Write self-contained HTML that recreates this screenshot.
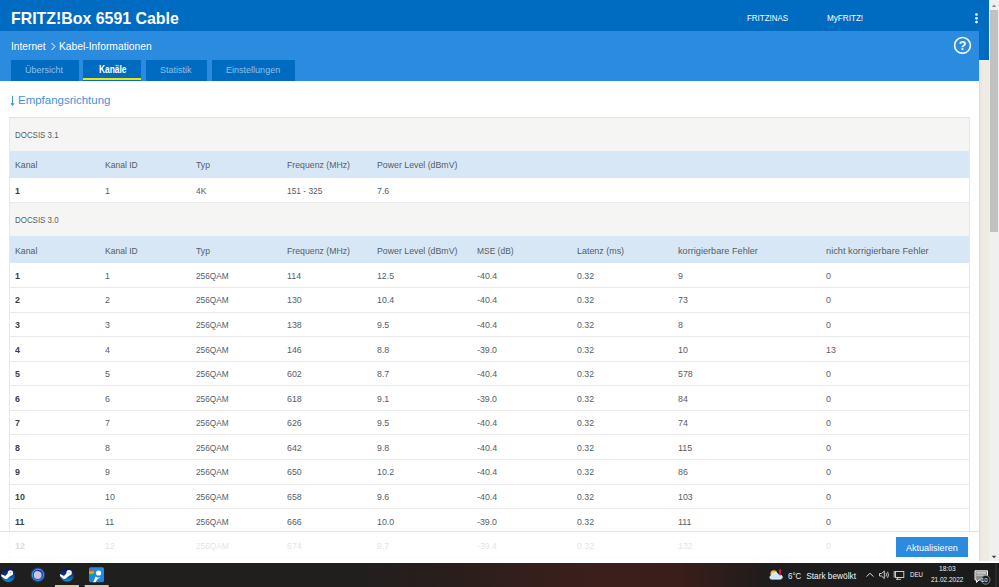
<!DOCTYPE html>
<html><head><meta charset="utf-8">
<style>
*{margin:0;padding:0;box-sizing:content-box}
html,body{width:999px;height:587px;overflow:hidden;background:#fff;position:relative;font-family:"Liberation Sans",sans-serif}
div{position:absolute}
.t{white-space:nowrap;line-height:1;color:#565d66;transform-origin:0 0}
.b{font-weight:bold;color:#383e47}
.sec{left:10px;width:959px;background:#f5f5f3}
.hdr{left:10px;width:959px;background:#d7e7f6}
.line{left:10px;width:959px;height:1px;background:#eaeaea}
.w{color:#fff;white-space:nowrap;line-height:1;transform-origin:0 0}
</style></head><body>
<div style="left:0;top:0;width:989px;height:31px;background:#006cc1"></div>
<div style="left:0;top:31px;width:979px;height:50px;background:#2a8bdf"></div>
<div style="left:979px;top:31px;width:10px;height:29px;background:#006cc1"></div>
<div class="w" style="left:11.00px;top:9.61px;font-size:17px;transform:scaleX(0.935);font-weight:bold">FRITZ!Box 6591 Cable</div>

<div class="w" style="left:747.00px;top:14.21px;font-size:9.2px;transform:scaleX(0.865);">FRITZ!NAS</div>

<div class="w" style="left:826.50px;top:14.21px;font-size:9.2px;transform:scaleX(0.885);">MyFRITZ!</div>

<svg style="position:absolute;left:969px;top:8px" width="15" height="20"><circle cx="7.5" cy="6.5" r="1.35" fill="#fff"/><circle cx="7.5" cy="10.3" r="1.35" fill="#fff"/><circle cx="7.5" cy="14.1" r="1.35" fill="#fff"/></svg>
<div class="w" style="left:11.00px;top:42.37px;font-size:10.2px;">Internet</div>

<svg style="position:absolute;left:0;top:0" width="999" height="100"><path d="M51.5 43 L55 46.5 L51.5 50" fill="none" stroke="#fff" stroke-width="1"/>
<circle cx="962.5" cy="45.4" r="7.9" fill="none" stroke="#fff" stroke-width="1.6"/></svg>
<div class="w" style="left:58.50px;top:42.37px;font-size:10.2px;transform:scaleX(1.010);">Kabel-Informationen</div>

<div class="w" style="left:957.6px;top:39.6px;font-size:12.5px;font-weight:bold;width:10px;text-align:center">?</div>
<div style="left:11px;top:60px;width:68px;height:21px;background:#006cc1"></div>
<div style="left:83px;top:60px;width:58px;height:21px;background:#006cc1"></div>
<div style="left:83px;top:78px;width:58px;height:2px;background:#f0e500"></div>
<div style="left:146px;top:60px;width:61px;height:21px;background:#006cc1"></div>
<div style="left:212px;top:60px;width:83px;height:21px;background:#006cc1"></div>
<div class="w" style="left:24.80px;top:64.76px;font-size:9.5px;transform:scaleX(0.950);color:#8fc0ec">Übersicht</div>

<div class="w" style="left:98.90px;top:64.94px;font-size:10px;transform:scaleX(0.840);font-weight:bold">Kanäle</div>

<div class="w" style="left:160.00px;top:64.76px;font-size:9.5px;transform:scaleX(0.950);color:#8fc0ec">Statistik</div>

<div class="w" style="left:226.00px;top:64.76px;font-size:9.5px;transform:scaleX(0.950);color:#8fc0ec">Einstellungen</div>

<svg style="position:absolute;left:0;top:90px" width="20" height="20"><path d="M12.5 5.8 L12.5 15" stroke="#4490de" stroke-width="1" fill="none"/><path d="M10.3 13.3 L12.5 15.9 L14.7 13.3 Z" fill="#4490de"/></svg>
<div class="t" style="left:17.60px;top:95.02px;font-size:11.2px;transform:scaleX(1.025);color:#4490de">Empfangsrichtung</div>

<div style="left:9px;top:117px;width:1px;height:446px;background:#e8e8e8"></div><div style="left:969px;top:117px;width:1px;height:446px;background:#e8e8e8"></div><div style="left:9px;top:117px;width:961px;height:1px;background:#e3e3e3"></div><div class="sec" style="top:118px;height:33px"></div><div class="t" style="left:15.00px;top:129.76px;font-size:9.5px;transform:scaleX(0.834);">DOCSIS 3.1</div>
<div class="hdr" style="top:151px;height:27px"></div><div class="t" style="left:15.00px;top:160.36px;font-size:9.5px;transform:scaleX(0.921);">Kanal</div>
<div class="t" style="left:105.30px;top:160.36px;font-size:9.5px;transform:scaleX(0.899);">Kanal ID</div>
<div class="t" style="left:196.00px;top:160.36px;font-size:9.5px;transform:scaleX(0.910);">Typ</div>
<div class="t" style="left:286.50px;top:160.36px;font-size:9.5px;transform:scaleX(0.918);">Frequenz (MHz)</div>
<div class="t" style="left:376.90px;top:160.36px;font-size:9.5px;transform:scaleX(0.923);">Power Level (dBmV)</div>
<div class="t b" style="left:15.00px;top:185.56px;font-size:9.5px;transform:scaleX(0.930);">1</div>
<div class="t" style="left:105.30px;top:185.56px;font-size:9.5px;transform:scaleX(0.930);">1</div>
<div class="t" style="left:196.00px;top:185.56px;font-size:9.5px;transform:scaleX(0.881);">4K</div>
<div class="t" style="left:286.50px;top:185.56px;font-size:9.5px;transform:scaleX(0.881);">151 - 325</div>
<div class="t" style="left:376.90px;top:185.56px;font-size:9.5px;transform:scaleX(0.924);">7.6</div>
<div class="line" style="top:202px"></div><div class="sec" style="top:203px;height:33px"></div><div class="t" style="left:15.00px;top:215.16px;font-size:9.5px;transform:scaleX(0.834);">DOCSIS 3.0</div>
<div class="hdr" style="top:236px;height:27px"></div><div class="t" style="left:15.00px;top:245.56px;font-size:9.5px;transform:scaleX(0.921);">Kanal</div>
<div class="t" style="left:105.30px;top:245.56px;font-size:9.5px;transform:scaleX(0.899);">Kanal ID</div>
<div class="t" style="left:196.00px;top:245.56px;font-size:9.5px;transform:scaleX(0.910);">Typ</div>
<div class="t" style="left:286.50px;top:245.56px;font-size:9.5px;transform:scaleX(0.918);">Frequenz (MHz)</div>
<div class="t" style="left:376.90px;top:245.56px;font-size:9.5px;transform:scaleX(0.923);">Power Level (dBmV)</div>
<div class="t" style="left:477.00px;top:245.56px;font-size:9.5px;transform:scaleX(0.888);">MSE (dB)</div>
<div class="t" style="left:577.00px;top:245.56px;font-size:9.5px;transform:scaleX(0.939);">Latenz (ms)</div>
<div class="t" style="left:677.60px;top:245.56px;font-size:9.5px;transform:scaleX(0.964);">korrigierbare Fehler</div>
<div class="t" style="left:826.00px;top:245.56px;font-size:9.5px;transform:scaleX(0.972);">nicht korrigierbare Fehler</div>
<div class="t b" style="left:15.00px;top:270.76px;font-size:9.5px;transform:scaleX(0.930);">1</div>
<div class="t" style="left:105.30px;top:270.76px;font-size:9.5px;transform:scaleX(0.930);">1</div>
<div class="t" style="left:196.00px;top:270.76px;font-size:9.5px;transform:scaleX(0.873);">256QAM</div>
<div class="t" style="left:286.50px;top:270.76px;font-size:9.5px;transform:scaleX(0.930);">114</div>
<div class="t" style="left:376.90px;top:270.76px;font-size:9.5px;transform:scaleX(0.919);">12.5</div>
<div class="t" style="left:477.00px;top:270.76px;font-size:9.5px;transform:scaleX(0.933);">-40.4</div>
<div class="t" style="left:577.00px;top:270.76px;font-size:9.5px;transform:scaleX(0.919);">0.32</div>
<div class="t" style="left:677.60px;top:270.76px;font-size:9.5px;transform:scaleX(0.930);">9</div>
<div class="t" style="left:826.00px;top:270.76px;font-size:9.5px;transform:scaleX(0.930);">0</div>
<div class="line" style="top:287px"></div><div class="t b" style="left:15.00px;top:295.34px;font-size:9.5px;transform:scaleX(0.930);">2</div>
<div class="t" style="left:105.30px;top:295.34px;font-size:9.5px;transform:scaleX(0.930);">2</div>
<div class="t" style="left:196.00px;top:295.34px;font-size:9.5px;transform:scaleX(0.873);">256QAM</div>
<div class="t" style="left:286.50px;top:295.34px;font-size:9.5px;transform:scaleX(0.930);">130</div>
<div class="t" style="left:376.90px;top:295.34px;font-size:9.5px;transform:scaleX(0.926);">10.4</div>
<div class="t" style="left:477.00px;top:295.34px;font-size:9.5px;transform:scaleX(0.933);">-40.4</div>
<div class="t" style="left:577.00px;top:295.34px;font-size:9.5px;transform:scaleX(0.919);">0.32</div>
<div class="t" style="left:677.60px;top:295.34px;font-size:9.5px;transform:scaleX(0.930);">73</div>
<div class="t" style="left:826.00px;top:295.34px;font-size:9.5px;transform:scaleX(0.930);">0</div>
<div class="line" style="top:312px"></div><div class="t b" style="left:15.00px;top:319.92px;font-size:9.5px;transform:scaleX(0.930);">3</div>
<div class="t" style="left:105.30px;top:319.92px;font-size:9.5px;transform:scaleX(0.930);">3</div>
<div class="t" style="left:196.00px;top:319.92px;font-size:9.5px;transform:scaleX(0.873);">256QAM</div>
<div class="t" style="left:286.50px;top:319.92px;font-size:9.5px;transform:scaleX(0.930);">138</div>
<div class="t" style="left:376.90px;top:319.92px;font-size:9.5px;transform:scaleX(0.924);">9.5</div>
<div class="t" style="left:477.00px;top:319.92px;font-size:9.5px;transform:scaleX(0.933);">-40.4</div>
<div class="t" style="left:577.00px;top:319.92px;font-size:9.5px;transform:scaleX(0.919);">0.32</div>
<div class="t" style="left:677.60px;top:319.92px;font-size:9.5px;transform:scaleX(0.930);">8</div>
<div class="t" style="left:826.00px;top:319.92px;font-size:9.5px;transform:scaleX(0.930);">0</div>
<div class="line" style="top:336px"></div><div class="t b" style="left:15.00px;top:344.50px;font-size:9.5px;transform:scaleX(0.930);">4</div>
<div class="t" style="left:105.30px;top:344.50px;font-size:9.5px;transform:scaleX(0.930);">4</div>
<div class="t" style="left:196.00px;top:344.50px;font-size:9.5px;transform:scaleX(0.873);">256QAM</div>
<div class="t" style="left:286.50px;top:344.50px;font-size:9.5px;transform:scaleX(0.930);">146</div>
<div class="t" style="left:376.90px;top:344.50px;font-size:9.5px;transform:scaleX(0.924);">8.8</div>
<div class="t" style="left:477.00px;top:344.50px;font-size:9.5px;transform:scaleX(0.922);">-39.0</div>
<div class="t" style="left:577.00px;top:344.50px;font-size:9.5px;transform:scaleX(0.919);">0.32</div>
<div class="t" style="left:677.60px;top:344.50px;font-size:9.5px;transform:scaleX(0.930);">10</div>
<div class="t" style="left:826.00px;top:344.50px;font-size:9.5px;transform:scaleX(0.930);">13</div>
<div class="line" style="top:361px"></div><div class="t b" style="left:15.00px;top:369.08px;font-size:9.5px;transform:scaleX(0.930);">5</div>
<div class="t" style="left:105.30px;top:369.08px;font-size:9.5px;transform:scaleX(0.930);">5</div>
<div class="t" style="left:196.00px;top:369.08px;font-size:9.5px;transform:scaleX(0.873);">256QAM</div>
<div class="t" style="left:286.50px;top:369.08px;font-size:9.5px;transform:scaleX(0.930);">602</div>
<div class="t" style="left:376.90px;top:369.08px;font-size:9.5px;transform:scaleX(0.924);">8.7</div>
<div class="t" style="left:477.00px;top:369.08px;font-size:9.5px;transform:scaleX(0.933);">-40.4</div>
<div class="t" style="left:577.00px;top:369.08px;font-size:9.5px;transform:scaleX(0.919);">0.32</div>
<div class="t" style="left:677.60px;top:369.08px;font-size:9.5px;transform:scaleX(0.930);">578</div>
<div class="t" style="left:826.00px;top:369.08px;font-size:9.5px;transform:scaleX(0.930);">0</div>
<div class="line" style="top:385px"></div><div class="t b" style="left:15.00px;top:393.66px;font-size:9.5px;transform:scaleX(0.930);">6</div>
<div class="t" style="left:105.30px;top:393.66px;font-size:9.5px;transform:scaleX(0.930);">6</div>
<div class="t" style="left:196.00px;top:393.66px;font-size:9.5px;transform:scaleX(0.873);">256QAM</div>
<div class="t" style="left:286.50px;top:393.66px;font-size:9.5px;transform:scaleX(0.930);">618</div>
<div class="t" style="left:376.90px;top:393.66px;font-size:9.5px;transform:scaleX(0.924);">9.1</div>
<div class="t" style="left:477.00px;top:393.66px;font-size:9.5px;transform:scaleX(0.922);">-39.0</div>
<div class="t" style="left:577.00px;top:393.66px;font-size:9.5px;transform:scaleX(0.919);">0.32</div>
<div class="t" style="left:677.60px;top:393.66px;font-size:9.5px;transform:scaleX(0.930);">84</div>
<div class="t" style="left:826.00px;top:393.66px;font-size:9.5px;transform:scaleX(0.930);">0</div>
<div class="line" style="top:410px"></div><div class="t b" style="left:15.00px;top:418.24px;font-size:9.5px;transform:scaleX(0.930);">7</div>
<div class="t" style="left:105.30px;top:418.24px;font-size:9.5px;transform:scaleX(0.930);">7</div>
<div class="t" style="left:196.00px;top:418.24px;font-size:9.5px;transform:scaleX(0.873);">256QAM</div>
<div class="t" style="left:286.50px;top:418.24px;font-size:9.5px;transform:scaleX(0.930);">626</div>
<div class="t" style="left:376.90px;top:418.24px;font-size:9.5px;transform:scaleX(0.924);">9.5</div>
<div class="t" style="left:477.00px;top:418.24px;font-size:9.5px;transform:scaleX(0.933);">-40.4</div>
<div class="t" style="left:577.00px;top:418.24px;font-size:9.5px;transform:scaleX(0.919);">0.32</div>
<div class="t" style="left:677.60px;top:418.24px;font-size:9.5px;transform:scaleX(0.930);">74</div>
<div class="t" style="left:826.00px;top:418.24px;font-size:9.5px;transform:scaleX(0.930);">0</div>
<div class="line" style="top:434px"></div><div class="t b" style="left:15.00px;top:442.82px;font-size:9.5px;transform:scaleX(0.930);">8</div>
<div class="t" style="left:105.30px;top:442.82px;font-size:9.5px;transform:scaleX(0.930);">8</div>
<div class="t" style="left:196.00px;top:442.82px;font-size:9.5px;transform:scaleX(0.873);">256QAM</div>
<div class="t" style="left:286.50px;top:442.82px;font-size:9.5px;transform:scaleX(0.930);">642</div>
<div class="t" style="left:376.90px;top:442.82px;font-size:9.5px;transform:scaleX(0.924);">9.8</div>
<div class="t" style="left:477.00px;top:442.82px;font-size:9.5px;transform:scaleX(0.933);">-40.4</div>
<div class="t" style="left:577.00px;top:442.82px;font-size:9.5px;transform:scaleX(0.919);">0.32</div>
<div class="t" style="left:677.60px;top:442.82px;font-size:9.5px;transform:scaleX(0.930);">115</div>
<div class="t" style="left:826.00px;top:442.82px;font-size:9.5px;transform:scaleX(0.930);">0</div>
<div class="line" style="top:459px"></div><div class="t b" style="left:15.00px;top:467.40px;font-size:9.5px;transform:scaleX(0.930);">9</div>
<div class="t" style="left:105.30px;top:467.40px;font-size:9.5px;transform:scaleX(0.930);">9</div>
<div class="t" style="left:196.00px;top:467.40px;font-size:9.5px;transform:scaleX(0.873);">256QAM</div>
<div class="t" style="left:286.50px;top:467.40px;font-size:9.5px;transform:scaleX(0.930);">650</div>
<div class="t" style="left:376.90px;top:467.40px;font-size:9.5px;transform:scaleX(0.926);">10.2</div>
<div class="t" style="left:477.00px;top:467.40px;font-size:9.5px;transform:scaleX(0.933);">-40.4</div>
<div class="t" style="left:577.00px;top:467.40px;font-size:9.5px;transform:scaleX(0.919);">0.32</div>
<div class="t" style="left:677.60px;top:467.40px;font-size:9.5px;transform:scaleX(0.930);">86</div>
<div class="t" style="left:826.00px;top:467.40px;font-size:9.5px;transform:scaleX(0.930);">0</div>
<div class="line" style="top:484px"></div><div class="t b" style="left:15.00px;top:491.98px;font-size:9.5px;transform:scaleX(0.930);">10</div>
<div class="t" style="left:105.30px;top:491.98px;font-size:9.5px;transform:scaleX(0.930);">10</div>
<div class="t" style="left:196.00px;top:491.98px;font-size:9.5px;transform:scaleX(0.873);">256QAM</div>
<div class="t" style="left:286.50px;top:491.98px;font-size:9.5px;transform:scaleX(0.930);">658</div>
<div class="t" style="left:376.90px;top:491.98px;font-size:9.5px;transform:scaleX(0.924);">9.6</div>
<div class="t" style="left:477.00px;top:491.98px;font-size:9.5px;transform:scaleX(0.933);">-40.4</div>
<div class="t" style="left:577.00px;top:491.98px;font-size:9.5px;transform:scaleX(0.919);">0.32</div>
<div class="t" style="left:677.60px;top:491.98px;font-size:9.5px;transform:scaleX(0.930);">103</div>
<div class="t" style="left:826.00px;top:491.98px;font-size:9.5px;transform:scaleX(0.930);">0</div>
<div class="line" style="top:508px"></div><div class="t b" style="left:15.00px;top:516.56px;font-size:9.5px;transform:scaleX(0.930);">11</div>
<div class="t" style="left:105.30px;top:516.56px;font-size:9.5px;transform:scaleX(0.930);">11</div>
<div class="t" style="left:196.00px;top:516.56px;font-size:9.5px;transform:scaleX(0.873);">256QAM</div>
<div class="t" style="left:286.50px;top:516.56px;font-size:9.5px;transform:scaleX(0.930);">666</div>
<div class="t" style="left:376.90px;top:516.56px;font-size:9.5px;transform:scaleX(0.926);">10.0</div>
<div class="t" style="left:477.00px;top:516.56px;font-size:9.5px;transform:scaleX(0.922);">-39.0</div>
<div class="t" style="left:577.00px;top:516.56px;font-size:9.5px;transform:scaleX(0.919);">0.32</div>
<div class="t" style="left:677.60px;top:516.56px;font-size:9.5px;transform:scaleX(0.930);">111</div>
<div class="t" style="left:826.00px;top:516.56px;font-size:9.5px;transform:scaleX(0.930);">0</div>
<div class="line" style="top:533px"></div><div class="t b" style="left:15.00px;top:541.14px;font-size:9.5px;transform:scaleX(0.930);">12</div>
<div class="t" style="left:105.30px;top:541.14px;font-size:9.5px;transform:scaleX(0.930);">12</div>
<div class="t" style="left:196.00px;top:541.14px;font-size:9.5px;transform:scaleX(0.873);">256QAM</div>
<div class="t" style="left:286.50px;top:541.14px;font-size:9.5px;transform:scaleX(0.930);">674</div>
<div class="t" style="left:376.90px;top:541.14px;font-size:9.5px;transform:scaleX(0.924);">9.7</div>
<div class="t" style="left:477.00px;top:541.14px;font-size:9.5px;transform:scaleX(0.922);">-39.4</div>
<div class="t" style="left:577.00px;top:541.14px;font-size:9.5px;transform:scaleX(0.919);">0.32</div>
<div class="t" style="left:677.60px;top:541.14px;font-size:9.5px;transform:scaleX(0.930);">132</div>
<div class="t" style="left:826.00px;top:541.14px;font-size:9.5px;transform:scaleX(0.930);">0</div>
<div class="line" style="top:557px"></div>
<div style="left:0;top:531px;width:979px;height:32px;background:rgba(255,255,255,0.82);border-top:1px solid #e2e2e2"></div>
<div style="left:896px;top:537px;width:72px;height:20px;background:#2a8bdf"></div>
<div class="w" style="left:905.80px;top:542.76px;font-size:9.5px;transform:scaleX(0.950);">Aktualisieren</div>

<div style="left:979px;top:60px;width:10px;height:501px;background:linear-gradient(90deg,#dcd9d3 0px,#e9e6e0 1.5px,#eeebe5 3px)"></div>
<div style="left:989px;top:0;width:10px;height:561px;background:#f0f0f0"></div>
<div style="left:990px;top:10px;width:8px;height:222px;background:#c1c1c1"></div>
<svg style="position:absolute;left:989px;top:0" width="10" height="563"><path d="M2.8 7 L5 4.6 L7.2 7Z" fill="#8a8a8a"/><path d="M2.6 555.8 L5 558.3 L7.4 555.8Z" fill="#444"/></svg>

<div style="left:0;top:563px;width:999px;height:24px;background:linear-gradient(90deg,#1f1f1f 0%,#211f1e 36%,#2a1e1c 46%,#361f1b 54%,#3b1f1b 60%,#3a1e1a 68%,#2a1c1b 73%,#1e1c1c 77%,#1b1b1b 100%)"></div>
<svg style="position:absolute;left:0;top:563px" width="999" height="24">
<defs>
<linearGradient id="stm" x1="0" y1="0" x2="0" y2="1"><stop offset="0" stop-color="#0e1450"/><stop offset="0.45" stop-color="#10307a"/><stop offset="1" stop-color="#1492d2"/></linearGradient>
<linearGradient id="app" x1="0" y1="0" x2="0" y2="1"><stop offset="0" stop-color="#1a8ff0"/><stop offset="1" stop-color="#1886e6"/></linearGradient>
</defs>
<g>
<circle cx="8.3" cy="12" r="6.9" fill="url(#stm)"/>
<circle cx="10.4" cy="9.9" r="2.7" fill="#fff"/><circle cx="10.6" cy="9.7" r="0.9" fill="#b8c4e0"/>
<path d="M1.2 11.2 L5.3 13 L8.2 10 L11.2 12.2 L7.2 15.7 Q5.6 16.4 4.2 15.5 L1.4 13.4 Z" fill="#fff"/>
</g>
<g>
<circle cx="37.9" cy="11.8" r="7.2" fill="#2c3c9c"/>
<circle cx="37.9" cy="11.8" r="5.6" fill="none" stroke="#35b6d9" stroke-width="0.9"/>
<circle cx="37.7" cy="12" r="3.9" fill="#c4c6e6"/>
<path d="M37.5 7.6 A4.4 4.4 0 0 1 41.8 10" fill="none" stroke="#1e2a70" stroke-width="0.8"/>
</g>
<g>
<circle cx="67" cy="11.9" r="6.9" fill="url(#stm)"/>
<circle cx="69.1" cy="9.8" r="2.7" fill="#fff"/><circle cx="69.3" cy="9.6" r="0.9" fill="#b8c4e0"/>
<path d="M59.9 11.1 L64 12.9 L66.9 9.9 L69.9 12.1 L65.9 15.6 Q64.3 16.3 62.9 15.4 L60.1 13.3 Z" fill="#fff"/>
</g>
<g>
<rect x="89" y="4.2" width="15" height="15" rx="1.6" fill="url(#app)"/>
<rect x="89" y="7.2" width="5.6" height="1.3" fill="#f04a2a"/>
<rect x="89" y="8.5" width="5" height="1.3" fill="#f2c21a"/>
<rect x="89" y="9.8" width="4.4" height="1.3" fill="#7cc43a"/>
<rect x="89" y="11.1" width="3.8" height="1.3" fill="#2ea84a"/>
<circle cx="98.6" cy="10" r="2.6" fill="#fff"/>
<path d="M93.2 19.2 L95.6 13.6 L97.8 14.8 L100.8 14 L97.4 16.3 L95.6 19.2 Z" fill="#fff"/>
</g>
<rect x="55" y="22" width="24" height="2" fill="#d6c9ae"/>
<rect x="84.7" y="22" width="24" height="2" fill="#d6c9ae"/>
<g>
<circle cx="773.8" cy="10.6" r="3.4" fill="#f0b83a"/>
<path d="M771.6 16.2 Q769.8 16.2 769.8 14.3 Q769.8 12.6 771.5 12.4 Q772 9.6 775 9.4 Q777.6 9.4 778.5 11.8 Q782.4 11.6 782.4 14.2 Q782.4 16.2 780.2 16.2 Z" fill="#cfe6f8" stroke="#f4fbff" stroke-width="0.6"/>
<circle cx="780" cy="7.5" r="1.3" fill="#e8102a"/>
<rect x="779.3" y="7.5" width="1.4" height="5" fill="#e03048"/>
</g>
<path d="M866.6 13.6 L870 10.2 L873.4 13.6" fill="none" stroke="#e6e6e6" stroke-width="1"/>
<g fill="none" stroke="#dcdcdc" stroke-width="0.9">
<path d="M879.5 10.5 L881.5 10.5 L884.3 8 L884.3 15.5 L881.5 13 L879.5 13 Z"/>
<path d="M886 10 Q887 11.8 886 13.5"/>
<path d="M887.6 8.8 Q889.3 11.8 887.6 14.8"/>
</g>
<g fill="none" stroke="#dcdcdc" stroke-width="0.9">
<rect x="895.5" y="8.5" width="8.3" height="6"/>
<path d="M894.2 8 L894.2 14.5 M897.5 14.5 L897.5 16.3 M896 16.3 L901 16.3"/>
</g>
<path d="M975 7.8 L987.5 7.8 L987.5 17 L979 17 L976.5 19.5 L976.5 17 L975 17 Z" fill="#8c8c8c" stroke="#f0f0f0" stroke-width="1"/>
<rect x="976.5" y="9.3" width="9.5" height="1.2" fill="#e0e0e0"/><rect x="976.5" y="11.6" width="9.5" height="1.2" fill="#c8c8c8"/>
<circle cx="985.6" cy="16.8" r="4.4" fill="#1c1c1c" stroke="#9a9a9a" stroke-width="0.8"/>
<rect x="995.5" y="0" width="1" height="24" fill="#3a3a3a"/>
</svg>

<div class="w" style="left:788.20px;top:571.57px;font-size:8.3px;transform:scaleX(0.950);color:#f2f2f2">6°C</div>

<div class="w" style="left:806.20px;top:571.57px;font-size:8.3px;color:#f2f2f2">Stark bewölkt</div>

<div class="w" style="left:910.00px;top:570.94px;font-size:7.4px;transform:scaleX(0.830);color:#eeeeee">DEU</div>

<div class="w" style="left:939.00px;top:565.47px;font-size:7.0px;transform:scaleX(0.950);color:#eeeeee">18:03</div>

<div class="w" style="left:930.70px;top:576.34px;font-size:7.4px;transform:scaleX(0.875);color:#eeeeee">21.02.2022</div>

<div class="w" style="left:981px;top:576.5px;font-size:6px;color:#fff;line-height:1">10</div>

</body></html>
